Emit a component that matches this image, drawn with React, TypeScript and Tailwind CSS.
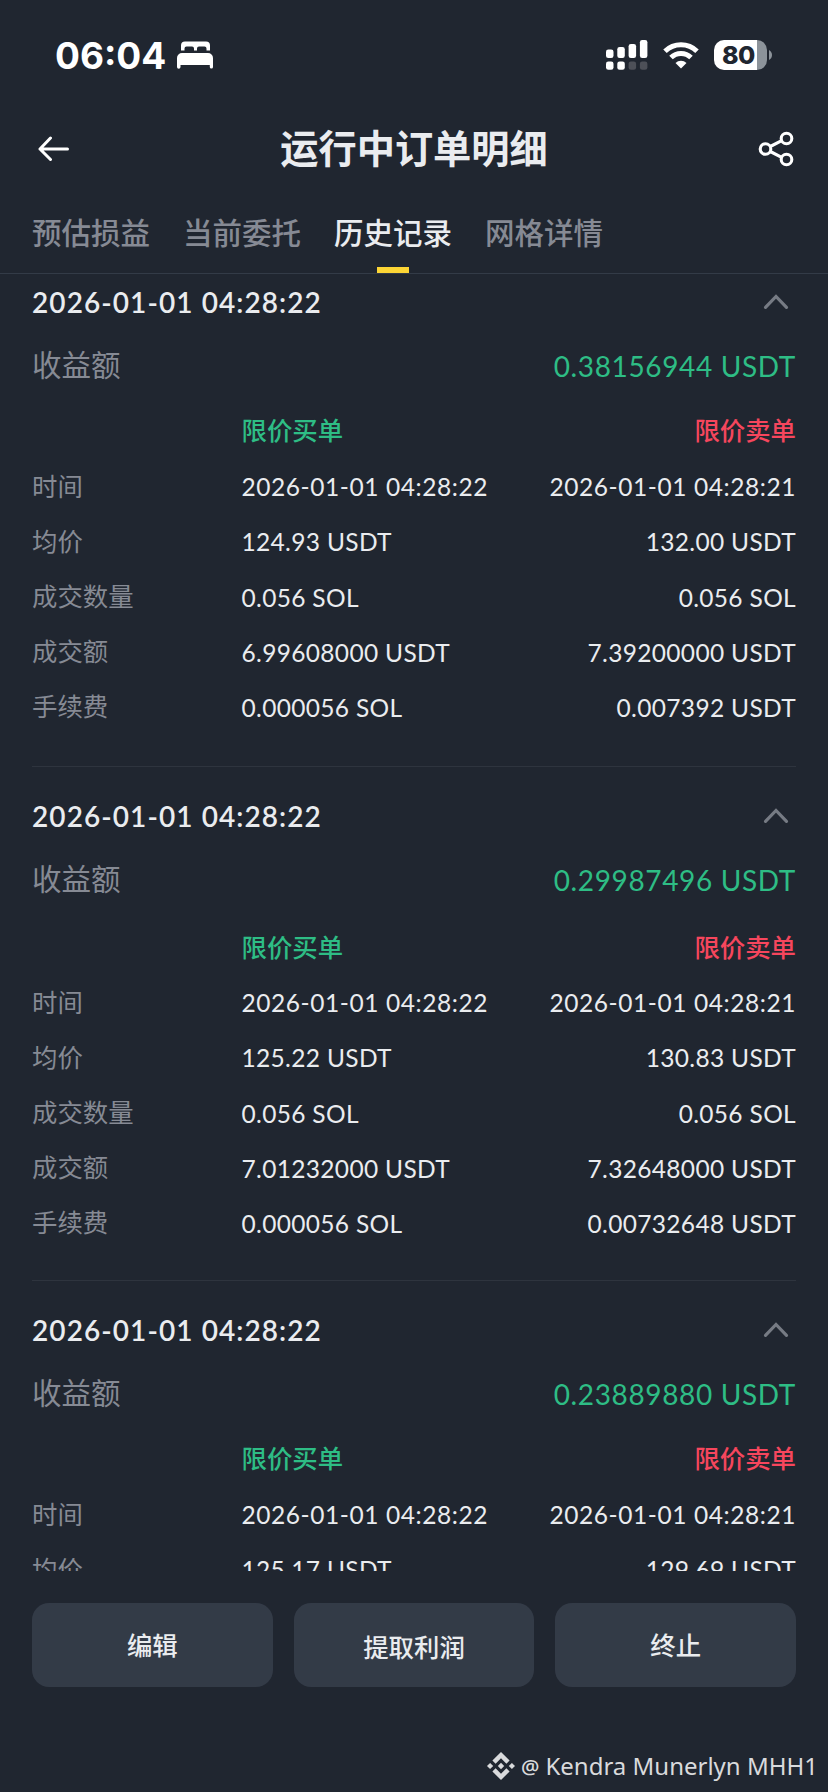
import React from 'react';

interface Side {
  time: string;
  price: string;
  amount?: string;
  total?: string;
  fee?: string;
}

interface Order {
  id: number;
  time: string;
  profit: string;
  buy: Side;
  sell: Side;
}

const TABS = ['预估损益', '当前委托', '历史记录', '网格详情'];
const ACTIVE_TAB = '历史记录';

const ROWS: { key: keyof Side; label: string }[] = [
  { key: 'time', label: '时间' },
  { key: 'price', label: '均价' },
  { key: 'amount', label: '成交数量' },
  { key: 'total', label: '成交额' },
  { key: 'fee', label: '手续费' },
];

const ORDERS: Order[] = [
  {
    id: 1,
    time: '2026-01-01 04:28:22',
    profit: '0.38156944 USDT',
    buy: { time: '2026-01-01 04:28:22', price: '124.93 USDT', amount: '0.056 SOL', total: '6.99608000 USDT', fee: '0.000056 SOL' },
    sell: { time: '2026-01-01 04:28:21', price: '132.00 USDT', amount: '0.056 SOL', total: '7.39200000 USDT', fee: '0.007392 USDT' },
  },
  {
    id: 2,
    time: '2026-01-01 04:28:22',
    profit: '0.29987496 USDT',
    buy: { time: '2026-01-01 04:28:22', price: '125.22 USDT', amount: '0.056 SOL', total: '7.01232000 USDT', fee: '0.000056 SOL' },
    sell: { time: '2026-01-01 04:28:21', price: '130.83 USDT', amount: '0.056 SOL', total: '7.32648000 USDT', fee: '0.00732648 USDT' },
  },
  {
    id: 3,
    time: '2026-01-01 04:28:22',
    profit: '0.23889880 USDT',
    buy: { time: '2026-01-01 04:28:22', price: '125.17 USDT' },
    sell: { time: '2026-01-01 04:28:21', price: '129.69 USDT' },
  },
];

const BedIcon = () => (
  <svg width="36" height="28" viewBox="0 0 36 28" fill="#fff">
    <path d="M4 9.5V4.5A4 4 0 0 1 8 .5H29A4 4 0 0 1 33 4.5V9.5H29.5V7.5A2 2 0 0 0 27.5 5.5H22A2 2 0 0 0 20 7.5V9.5H17V7.5A2 2 0 0 0 15 5.5H9.5A2 2 0 0 0 7.5 7.5V9.5Z" />
    <path d="M0 17A5 5 0 0 1 5 12H31A5 5 0 0 1 36 17V26A1.5 1.5 0 0 1 32.8 26V24H3.5V26A1.5 1.5 0 0 1 0 26Z" />
  </svg>
);

const SignalIcon = () => (
  <svg width="42" height="30" viewBox="0 0 42 30" fill="#fff">
    <rect x="0" y="9.5" width="7.5" height="8.5" rx="2.3" />
    <rect x="11.3" y="7" width="7.5" height="11" rx="2.3" />
    <rect x="22.6" y="4" width="7.5" height="14" rx="2.3" />
    <rect x="33.9" y="0" width="7.5" height="18" rx="2.3" />
    <rect x="0" y="21.5" width="7.5" height="8.3" rx="2.3" />
    <rect x="11.3" y="21.5" width="7.5" height="8.3" rx="2.3" />
    <rect x="22.6" y="21.5" width="7.5" height="8.3" rx="2.3" fill="#4d5058" />
    <rect x="33.9" y="21.5" width="7.5" height="8.3" rx="2.3" fill="#4d5058" />
  </svg>
);

const WifiIcon = () => (
  <svg width="36" height="27" viewBox="0 0 36 27" fill="none" stroke="#fff" strokeWidth="5">
    <path d="M2 9.3A23 23 0 0 1 34 9.3" />
    <path d="M8 15.5A14.3 14.3 0 0 1 28 15.5" />
    <path d="M18 26.5L12.5 21A8 8 0 0 1 23.5 21Z" fill="#fff" stroke="none" />
  </svg>
);

const Battery = () => (
  <div className="flex items-center gap-[2px]">
    <div className="flex h-[30px] w-[53px] items-center overflow-hidden rounded-[10px] bg-[linear-gradient(to_right,#fff_43px,#8c939a_43px)]">
      <span className="pl-[8px] font-[Inter,sans-serif] text-[25px] leading-[30px] font-extrabold tracking-[-0.5px] text-[#202630]">80</span>
    </div>
    <svg width="4" height="10" viewBox="0 0 4 10" fill="#8c939a">
      <path d="M0 0C4 2 4 8 0 10Z" />
    </svg>
  </div>
);

const BackIcon = () => (
  <svg width="32" height="26" viewBox="0 0 32 26" fill="none" stroke="#fff" strokeWidth="3" strokeLinecap="round" strokeLinejoin="round">
    <path d="M29.5 13H2M12.5 2L2 13L12.5 23.5" />
  </svg>
);

const ShareIcon = () => (
  <svg width="36" height="36" viewBox="0 0 36 36" fill="none" stroke="#fff" strokeWidth="3.1">
    <circle cx="7.5" cy="18" r="5.3" />
    <circle cx="28.5" cy="7.5" r="5.3" />
    <circle cx="28.5" cy="28.5" r="5.3" />
    <path d="M12.3 15.5L23.7 9.6M12.3 20.5L23.7 26.4" />
  </svg>
);

const ChevronUp = () => (
  <svg width="26" height="16" viewBox="0 0 26 16" fill="none" stroke="#767b84" strokeWidth="3.2" strokeLinecap="round">
    <path d="M2.5 13.3L13 2.5L23.5 13.3" />
  </svg>
);

const DiamondLogo = () => (
  <svg width="28" height="28" viewBox="0 0 28 28" fill="#d9dadc">
    <path d="M14 0L22.6 8.6L19.4 11.7L14 6.3L8.6 11.7L5.4 8.6Z" />
    <path d="M14 28L5.4 19.4L8.6 16.3L14 21.7L19.4 16.3L22.6 19.4Z" />
    <path d="M3.1 10.9L6.2 14L3.1 17.1L0 14Z" />
    <path d="M24.9 10.9L28 14L24.9 17.1L21.8 14Z" />
    <path d="M14 10.8L17.2 14L14 17.2L10.8 14Z" />
  </svg>
);

const OrderCard: React.FC<{ order: Order; roomy?: boolean }> = ({ order, roomy }) => {
  const rows = ROWS.filter((row) => order.buy[row.key]);

  return (
    <section className="mx-8 h-[514px] shrink-0 border-b border-[#2e343e] pt-[18px]">
      <div className="flex h-[62px] items-center justify-between">
        <h2 className="text-[28px] font-semibold tracking-[1.08px] text-[#eaecef]">{order.time}</h2>
        <span className="pr-[7px]">
          <ChevronUp />
        </span>
      </div>
      <div className="flex h-[64px] items-center justify-between">
        <span className="pt-px text-[29.5px] text-[#868a94]">收益额</span>
        <span className="pt-px text-[28px] tracking-[0.65px] text-[#2ebd85]">{order.profit}</span>
      </div>
      <div
        className={
          roomy
            ? 'flex h-[65px] items-center pt-[7px] text-[25.4px] font-medium'
            : 'flex h-[63px] items-center pt-[4px] text-[25.4px] font-medium'
        }
      >
        <span className="ml-[209.5px] flex-1 text-[#2ebd85]">限价买单</span>
        <span className="text-[#f6465d]">限价卖单</span>
      </div>
      {rows.map((row) => (
        <div
          key={row.key}
          className={
            row.key === 'time'
              ? 'flex h-[55.2px] items-center text-[24.5px] tracking-[0.57px] text-[#eaecef]'
              : 'flex h-[55.2px] items-center text-[24.5px] tracking-[0.33px] text-[#eaecef]'
          }
        >
          <span className="w-[209.5px] pb-[4px] text-[25.4px] tracking-normal text-[#868a94]">{row.label}</span>
          <span className="flex-1">{order.buy[row.key]}</span>
          <span>{order.sell[row.key]}</span>
        </div>
      ))}
    </section>
  );
};

const App: React.FC = () => {
  return (
    <div className="flex h-[1792px] w-[828px] flex-col overflow-hidden bg-[#202630] font-[Lato,'Noto_Sans_CJK_SC',sans-serif] whitespace-nowrap">
      <div className="flex h-[110px] shrink-0 items-center justify-between pr-[55px] pl-[55px]">
        <div className="flex items-center gap-[11px]">
          <span className="font-[Inter,sans-serif] text-[37px] leading-none font-bold text-white">06:04</span>
          <BedIcon />
        </div>
        <div className="flex items-center gap-[15px]">
          <SignalIcon />
          <WifiIcon />
          <Battery />
        </div>
      </div>

      <header className="flex h-[78px] shrink-0 items-center justify-between pr-[34px] pl-[38px]">
        <BackIcon />
        <h1 className="pb-px text-[38.2px] font-bold text-[#eaecef]">运行中订单明细</h1>
        <ShareIcon />
      </header>

      <nav className="flex h-[86px] shrink-0 gap-[33px] border-b border-[#333b47] px-8 text-[29.5px] font-medium">
        {TABS.map((tab) => (
          <div
            key={tab}
            className={tab === ACTIVE_TAB ? 'flex flex-col items-center text-[#eaecef]' : 'flex flex-col items-center text-[#868a94]'}
          >
            <span className="flex h-[79px] items-center pt-[11px]">{tab}</span>
            {tab === ACTIVE_TAB && <span className="h-[6px] w-[32px] bg-[#fcd535]" />}
          </div>
        ))}
      </nav>

      <main className="flex h-[1297px] shrink-0 flex-col overflow-hidden">
        {/* list is scrolled slightly under the tab bar */}
        <div className="-mt-[21px] flex shrink-0 flex-col">
          {ORDERS.map((order) => (
            <OrderCard key={order.id} order={order} roomy={order.id === 2} />
          ))}
        </div>
      </main>

      <div className="mt-8 grid h-[84px] shrink-0 grid-cols-3 gap-[21px] px-8 text-[25.4px] font-medium text-[#eaecef]">
        <button className="rounded-[17px] bg-[#333b47]">编辑</button>
        <button className="rounded-[17px] bg-[#333b47] pt-[4px]">提取利润</button>
        <button className="rounded-[17px] bg-[#333b47]">终止</button>
      </div>

      <footer className="mt-[57px] flex h-[44px] shrink-0 items-center justify-end gap-[6px] pr-[10px] font-['Noto_Sans',sans-serif] text-[24px] text-[#d9dadc]">
        <DiamondLogo />
        <span className="text-[20.5px] font-medium">@</span>
        <span>Kendra Munerlyn MHH1</span>
      </footer>
    </div>
  );
};

export default App;
